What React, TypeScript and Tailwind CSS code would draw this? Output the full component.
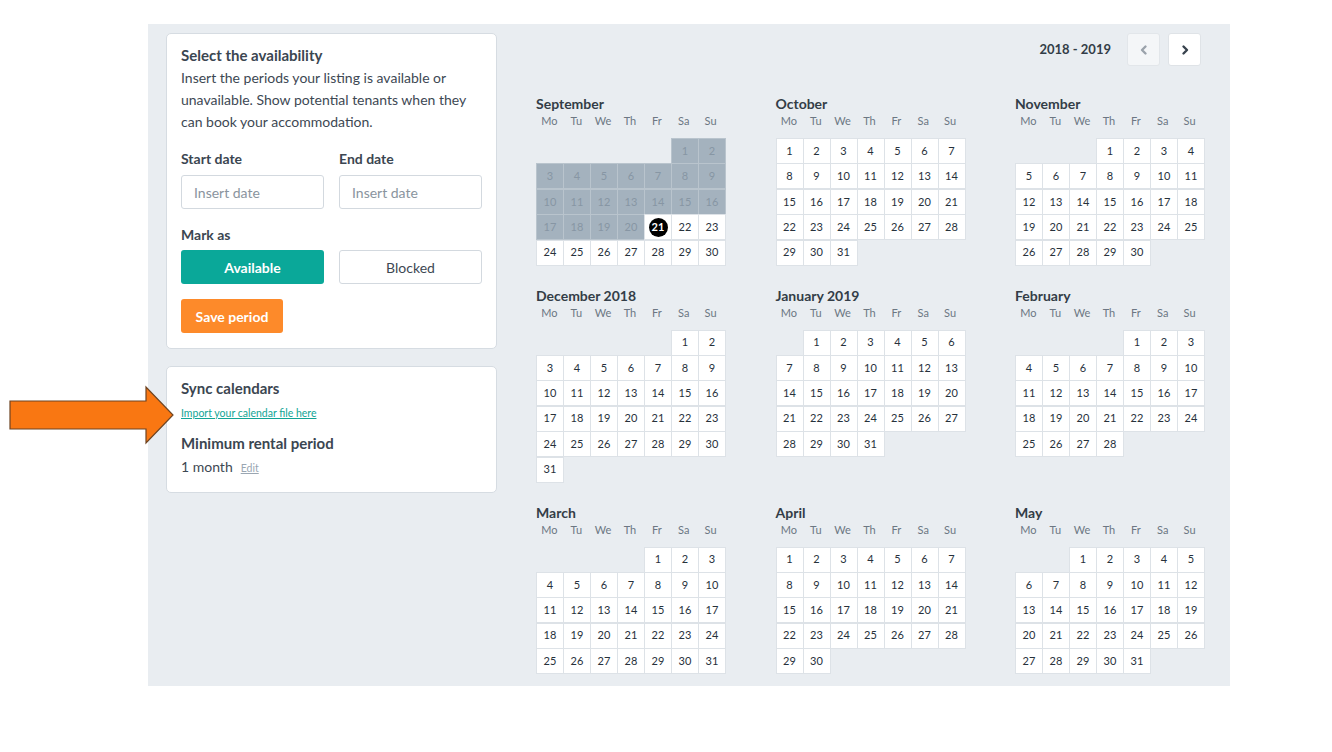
import React from 'react';

type Month = { name: string; offset: number; days: number };

const months: Month[] = [
  { name: 'September', offset: 5, days: 30 },
  { name: 'October', offset: 0, days: 31 },
  { name: 'November', offset: 3, days: 30 },
  { name: 'December 2018', offset: 5, days: 31 },
  { name: 'January 2019', offset: 1, days: 31 },
  { name: 'February', offset: 4, days: 28 },
  { name: 'March', offset: 4, days: 31 },
  { name: 'April', offset: 0, days: 30 },
  { name: 'May', offset: 2, days: 31 },
];

const weekdays = ['Mo', 'Tu', 'We', 'Th', 'Fr', 'Sa', 'Su'];

const MonthGrid: React.FC<{ month: Month; index: number }> = ({ month, index }) => {
  const isSept = index === 0;
  const cells: React.ReactNode[] = [];
  for (let i = 0; i < month.offset; i++) {
    cells.push(<div key={'e' + i} />);
  }
  for (let d = 1; d <= month.days; d++) {
    const past = isSept && d < 21;
    const today = isSept && d === 21;
    cells.push(
      <div
        key={d}
        className={
          past
            ? 'flex items-center justify-center bg-[#a4b2be] text-[#8796a4] outline outline-1 outline-[#b9c4cd] text-[11px]'
            : 'flex items-center justify-center bg-white text-[#27313b] outline outline-1 outline-[#dde2e7] text-[11px]'
        }
      >
        {today ? (
          <span className="flex h-[19px] w-[19px] items-center justify-center rounded-full bg-black text-[11px] font-bold text-white">
            21
          </span>
        ) : (
          d
        )}
      </div>
    );
  }

  return (
    <div className="w-[188px]">
      <div className="h-[16px] text-[14px] font-bold leading-[16px] text-[#333d47]">{month.name}</div>
      <div className="mt-[1px] grid h-[16px] grid-cols-7 text-center text-[11px] leading-[16px] text-[#6c7783]">
        {weekdays.map((w) => (
          <div key={w}>{w}</div>
        ))}
      </div>
      <div className="mt-[10px] grid grid-cols-[repeat(7,26px)] auto-rows-[24px] gap-x-px gap-y-[1.4px] pl-px">{cells}</div>
    </div>
  );
};

export default function App() {
  return (
    <div className="relative h-[752px] w-[1332px] bg-white text-[#3b4652]" style={{ fontFamily: 'Lato, "Open Sans", sans-serif' }}>
      <div className="ml-[148px] pt-[24px]">
        <div className="flex h-[662px] w-[1082px] bg-[#e9edf1] pl-[18px] pt-[9px]">
          {/* left column */}
          <div className="flex w-[331px] flex-col gap-[17px]">
            <div className="rounded-[5px] border border-[#d6dce2] bg-white px-[14px] pb-[15px] pt-[11px]">
              <div className="text-[15px] font-bold leading-[20px] text-[#3b4651]">Select the availability</div>
              <p className="mt-[2px] text-[14px] leading-[22px] text-[#3d4853]">
                Insert the periods your listing is available or unavailable. Show potential tenants when they can book your accommodation.
              </p>
              <div className="mt-[18px] grid grid-cols-2 gap-x-[15px]">
                <div>
                  <div className="text-[14px] font-bold leading-[16px] text-[#3b4651]">Start date</div>
                  <div className="mt-[8px] flex h-[34px] items-center rounded-[3px] border border-[#d3d9df] pl-[12px] text-[14px] text-[#8a949e]">
                    Insert date
                  </div>
                </div>
                <div>
                  <div className="text-[14px] font-bold leading-[16px] text-[#3b4651]">End date</div>
                  <div className="mt-[8px] flex h-[34px] items-center rounded-[3px] border border-[#d3d9df] pl-[12px] text-[14px] text-[#8a949e]">
                    Insert date
                  </div>
                </div>
              </div>
              <div className="mt-[18px] text-[14px] font-bold leading-[16px] text-[#3b4651]">Mark as</div>
              <div className="mt-[7px] grid grid-cols-2 gap-x-[15px]">
                <button className="h-[34px] rounded-[3px] bg-[#0aa899] text-[14px] font-bold text-white">Available</button>
                <button className="h-[34px] rounded-[3px] border border-[#d3d9df] bg-white text-[14px] text-[#3d4853]">Blocked</button>
              </div>
              <button className="mt-[15px] h-[34px] w-[102px] rounded-[3px] bg-[#fd8a2a] text-[14px] font-bold text-white">Save period</button>
            </div>

            <div className="rounded-[5px] border border-[#d6dce2] bg-white px-[14px] pb-[15px] pt-[11px]">
              <div className="text-[15px] font-bold leading-[20px] text-[#3b4651]">Sync calendars</div>
              <a className="mt-[8px] block text-[10.5px] leading-[14px] text-[#12a595] underline">Import your calendar file here</a>
              <div className="mt-[13px] text-[15px] font-bold leading-[20px] text-[#3b4651]">Minimum rental period</div>
              <div className="mt-[4px] flex items-baseline gap-[8px]">
                <span className="text-[14px] leading-[20px] text-[#3d4853]">1 month</span>
                <span className="text-[10.5px] text-[#9aa6b2] underline">Edit</span>
              </div>
            </div>
          </div>

          {/* calendars */}
          <div className="ml-[39px] w-[667px]">
            <div className="flex h-[33px] items-center justify-end gap-[8px] pr-[2px]">
              <span className="mr-[8px] text-[13px] font-bold text-[#333d47]">2018 - 2019</span>
              <button className="flex h-[33px] w-[33px] items-center justify-center rounded-[3px] border border-[#e2e6ea] bg-[#f4f6f8]">
                <svg width="12" height="12" viewBox="0 0 12 12" fill="none" stroke="#9aa2ab" strokeWidth="2.4" strokeLinecap="round" strokeLinejoin="round">
                  <path d="M7.5 2.5L4 6l3.5 3.5" />
                </svg>
              </button>
              <button className="flex h-[33px] w-[33px] items-center justify-center rounded-[3px] border border-[#dfe3e7] bg-white">
                <svg width="12" height="12" viewBox="0 0 12 12" fill="none" stroke="#38434e" strokeWidth="2.4" strokeLinecap="round" strokeLinejoin="round">
                  <path d="M4.5 2.5L8 6 4.5 9.5" />
                </svg>
              </button>
            </div>
            <div className="mt-[30px] grid grid-cols-[188px_188px_188px] items-start gap-x-[51.5px] gap-y-[23px]">
              {months.map((m, i) => (
                <MonthGrid key={m.name} month={m} index={i} />
              ))}
            </div>
          </div>
        </div>
      </div>

      {/* annotation arrow */}
      <svg className="absolute left-0 top-[380px]" width="190" height="70" viewBox="0 0 190 70">
        <polygon points="10,21 146,21 146,7 173,35 146,63 146,49 10,49" fill="#f97712" stroke="#6e4422" strokeWidth="1.2" strokeLinejoin="miter" />
      </svg>
    </div>
  );
}
